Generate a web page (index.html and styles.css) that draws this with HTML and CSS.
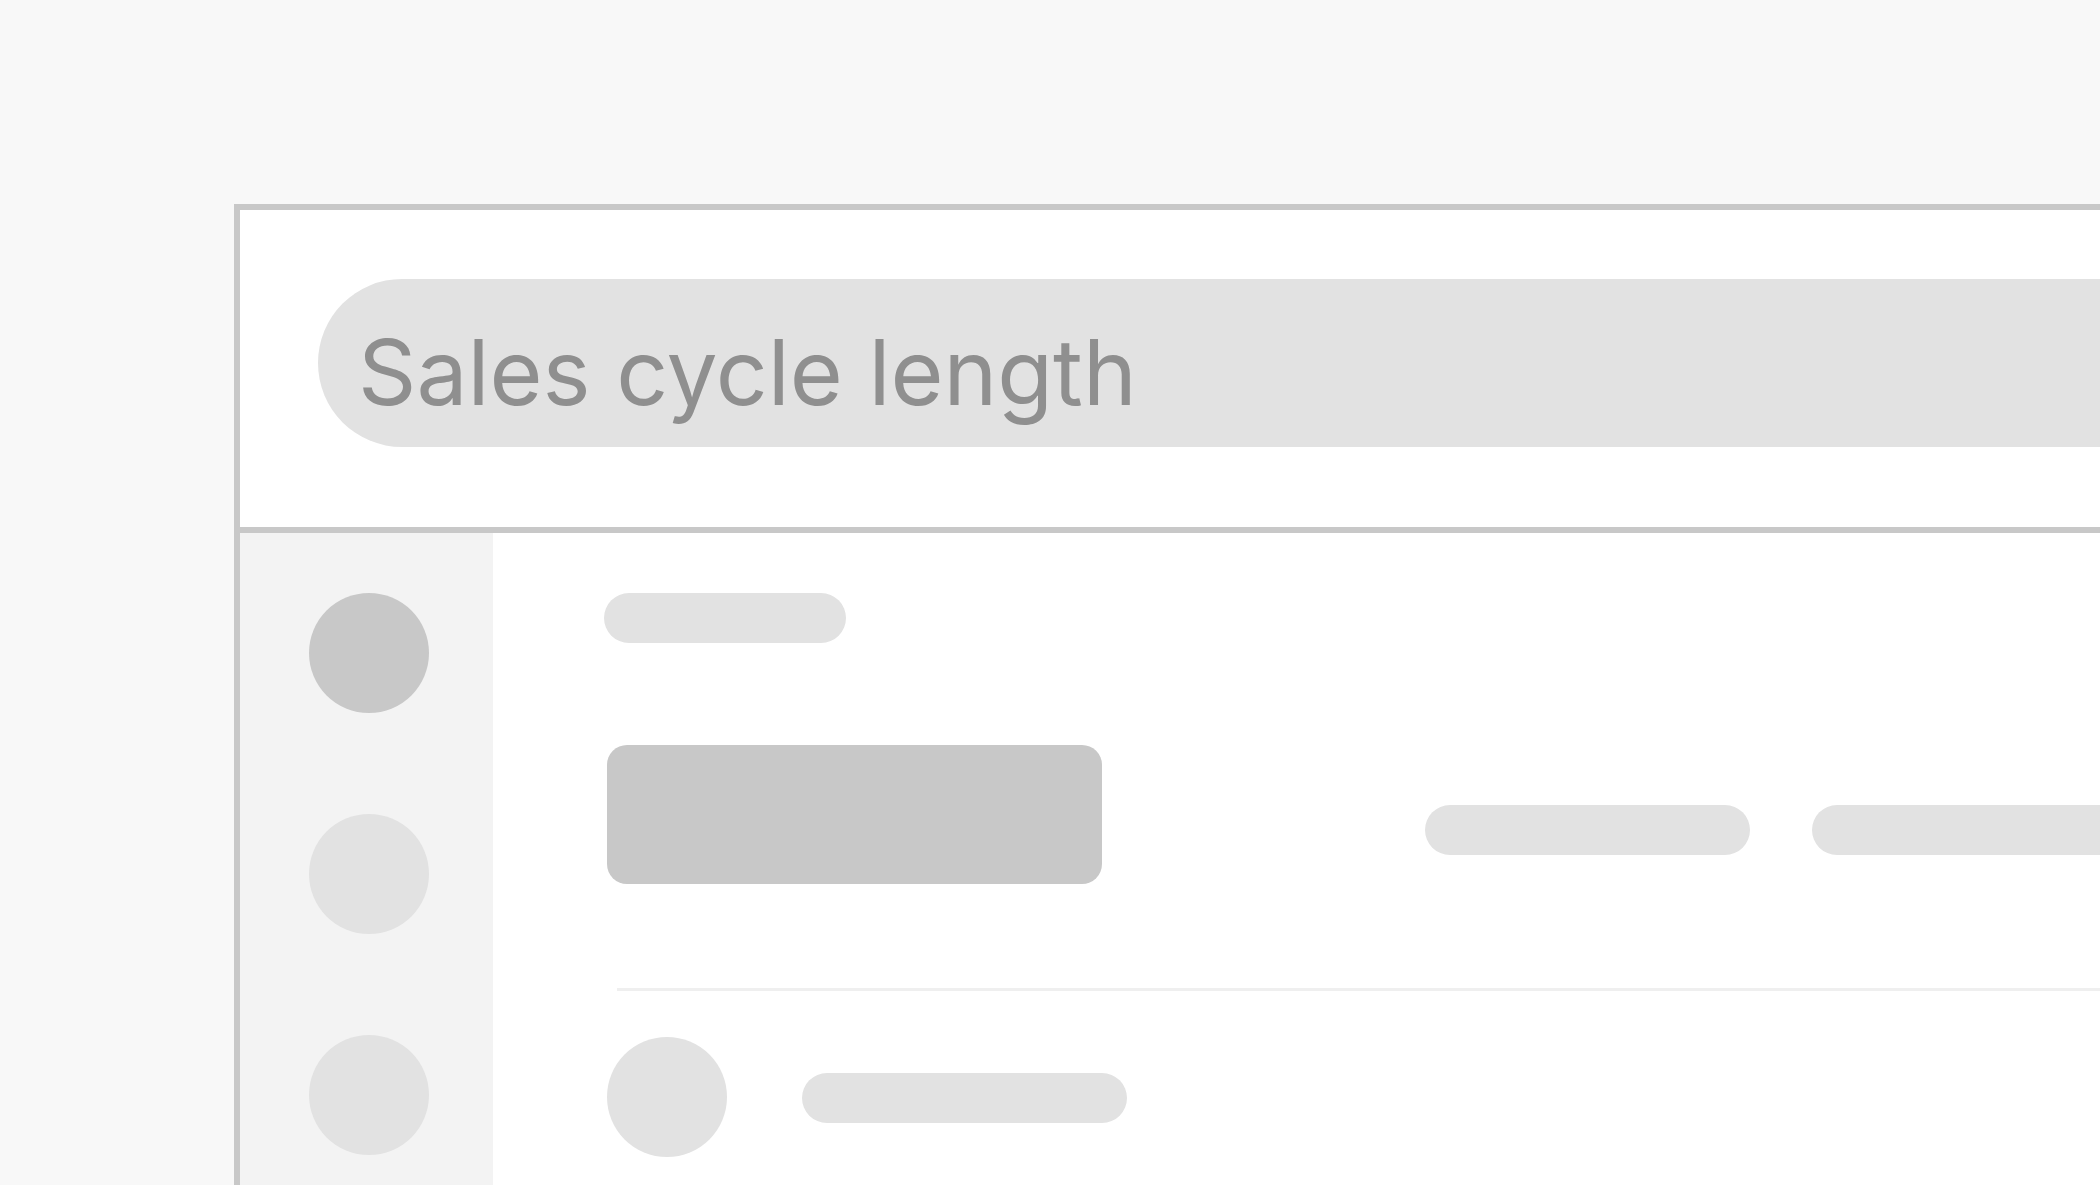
FILE: index.html
```html
<!DOCTYPE html>
<html lang="en">
<head>
  <meta charset="UTF-8">
  <title>Sales cycle length</title>
  <link rel="stylesheet" href="styles.css">
</head>
<body>

  <div class="frame">
    <div class="header">
      <div class="search">
        <span class="search-text">Sales cycle length</span>
      </div>
    </div>

    <div class="body">
      <div class="sidebar">
        <div class="dot dark"></div>
        <div class="dot"></div>
        <div class="dot"></div>
      </div>

      <div class="main">
        <div class="bar short"></div>

        <div class="row stats">
          <div class="block"></div>
          <div class="bar mid first"></div>
          <div class="bar wide"></div>
        </div>

        <div class="divider"></div>

        <div class="row item">
          <div class="dot"></div>
          <div class="bar mid"></div>
        </div>
      </div>
    </div>
  </div>

</body>
</html>
```

FILE: styles.css
```css
html, body {
  margin: 0;
  height: 100%;
  overflow: hidden;
}
body {
  background: #f8f8f8;
  font-family: Inter, "Liberation Sans", sans-serif;
}
.frame {
  margin: 204px 0 0 234px;
  border-top: 6px solid #c8c8c8;
  border-left: 6px solid #c8c8c8;
  background: #fff;
  height: calc(100% - 204px);
  box-sizing: border-box;
  display: flex;
  flex-direction: column;
}
.header {
  height: 323px;
  flex: none;
  border-bottom: 6px solid #c8c8c8;
  padding: 69px 0 0 78px;
  box-sizing: border-box;
}
.search {
  height: 168px;
  background: #e2e2e2;
  border-radius: 84px 0 0 84px;
  display: flex;
  align-items: center;
  padding-left: 40px;
}
.search-text {
  font-size: 91px;
  line-height: 1;
  color: #8f8f8f;
  padding-top: 19px;
}
.body {
  display: flex;
  flex: 1;
  overflow: hidden;
}
.sidebar {
  width: 253px;
  background: #f3f3f3;
  display: flex;
  flex-direction: column;
  gap: 101px;
  padding: 60px 0 0 69px;
  box-sizing: border-box;
}
.dot {
  width: 120px;
  height: 120px;
  border-radius: 50%;
  background: #e2e2e2;
  flex: none;
}
.dot.dark { background: #c8c8c8; }
.main {
  flex: 1;
  padding: 60px 0 0 111px;
}
.bar {
  height: 50px;
  border-radius: 25px;
  background: #e2e2e2;
  flex: none;
}
.bar.short { width: 242px; }
.bar.mid { width: 325px; }
.bar.wide { flex: 1; border-radius: 25px 0 0 25px; margin-left: 62px; }
.row {
  display: flex;
  align-items: flex-start;
}
.row.stats { margin-top: 102px; padding-left: 3px; }
.block {
  width: 495px;
  height: 139px;
  border-radius: 20px;
  background: #c8c8c8;
  flex: none;
}
.stats .bar { margin-top: 60px; }
.bar.first { margin-left: 323px; }
.divider {
  height: 3px;
  background: #efefef;
  margin: 104px 0 0 13px;
}
.row.item {
  align-items: center;
  margin-top: 46px;
  padding-left: 3px;
}
.row.item .bar {
  margin-left: 75px;
  position: relative;
  top: 1px;
}
```
